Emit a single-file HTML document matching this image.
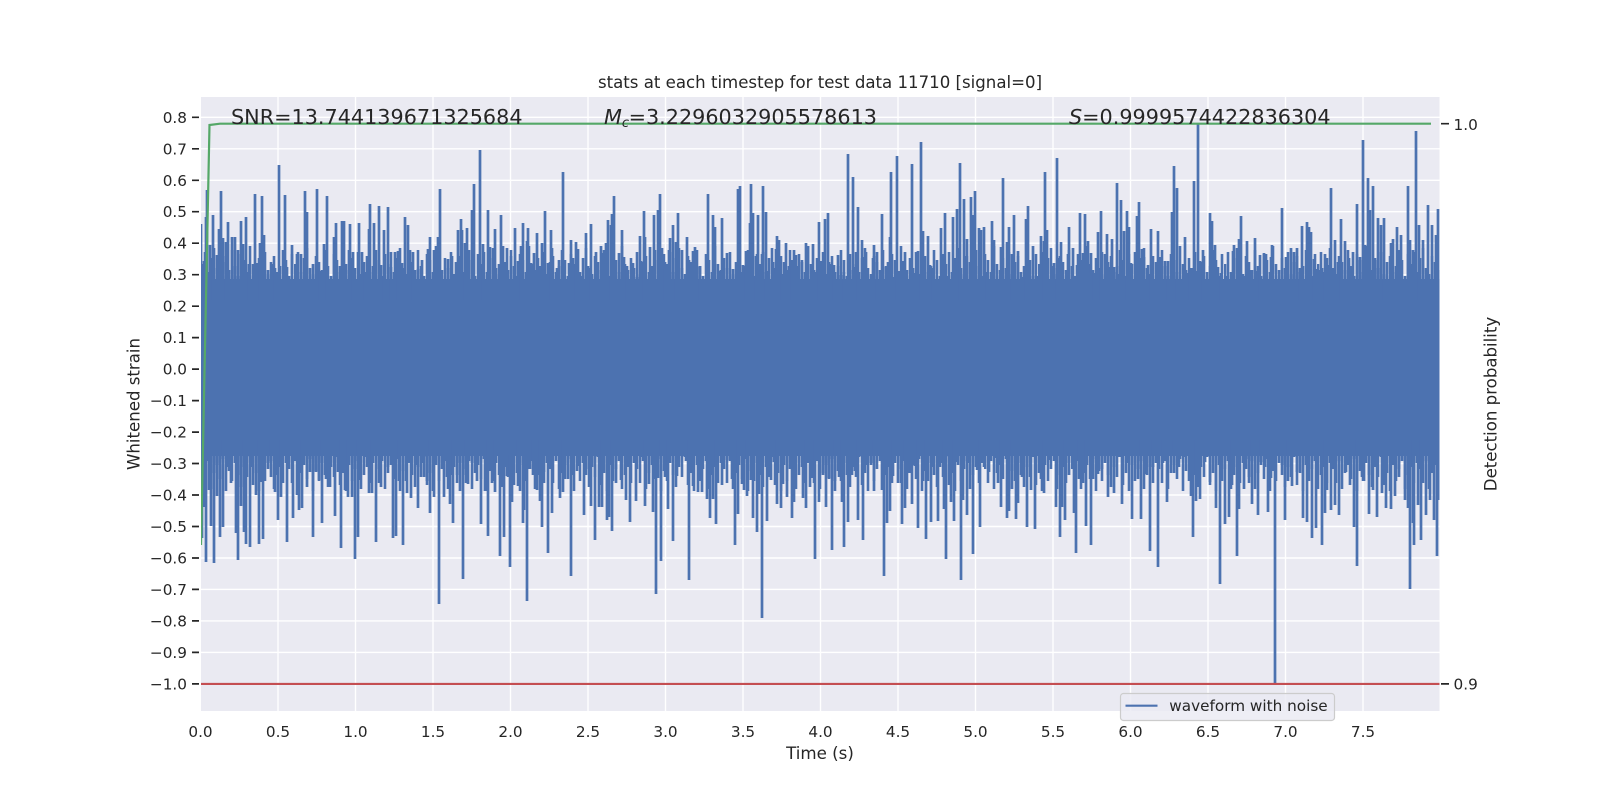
<!DOCTYPE html>
<html><head><meta charset="utf-8"><title>stats</title>
<style>html,body{margin:0;padding:0;background:#fff}svg{display:block}text{font-family:"DejaVu Sans","Liberation Sans",sans-serif;fill:#262626}</style>
</head><body>
<svg width="1600" height="800" viewBox="0 0 1600 800" xmlns="http://www.w3.org/2000/svg">
<defs><clipPath id="ax"><rect x="201" y="97" width="1238.5" height="614"/></clipPath>
<pattern id="pt" x="201" y="244" width="93" height="37" patternUnits="userSpaceOnUse">
<path fill="none" stroke="#4c72b0" stroke-width="2.6" d="M1 20V37M4 8V37M7 28V37M10 14V37M13 4V37M16 24V37M19 30V37M22 12V37M25 18V37M28 26V37M31 6V37M34 22V37M37 32V37M40 10V37M43 16V37M46 28V37M49 2V37M52 20V37M55 26V37M58 14V37M61 24V37M64 8V37M67 30V37M70 18V37M73 12V37M76 28V37M79 22V37M82 6V37M85 16V37M88 32V37M91 10V37"/>
</pattern>
<pattern id="pb" x="201" y="455" width="87" height="38" patternUnits="userSpaceOnUse">
<path fill="none" stroke="#4c72b0" stroke-width="2.6" d="M1 0V14M4 0V28M7 0V6M10 0V34M13 0V18M16 0V10M19 0V24M22 0V4M25 0V36M28 0V16M31 0V26M34 0V8M37 0V20M40 0V32M43 0V12M46 0V22M49 0V2M52 0V30M55 0V18M58 0V36M61 0V10M64 0V26M67 0V14M70 0V6M73 0V34M76 0V20M79 0V12M82 0V28M85 0V8"/>
</pattern>
</defs>
<rect width="1600" height="800" fill="#fff"/>
<rect x="201" y="97" width="1238.5" height="614" fill="#eaeaf2"/>
<g stroke="#fff" stroke-width="1.4" fill="none">
<path d="M278 97V711M355.5 97V711M433 97V711M510.5 97V711M588 97V711M665.5 97V711M743 97V711M820.5 97V711M898 97V711M975.5 97V711M1053 97V711M1130.5 97V711M1208 97V711M1285.5 97V711M1363 97V711"/>
<path d="M201 117.3H1439.5M201 148.8H1439.5M201 180.3H1439.5M201 211.7H1439.5M201 243.2H1439.5M201 274.7H1439.5M201 306.2H1439.5M201 337.6H1439.5M201 369.1H1439.5M201 400.6H1439.5M201 432.1H1439.5M201 463.5H1439.5M201 495H1439.5M201 526.5H1439.5M201 558H1439.5M201 589.4H1439.5M201 620.9H1439.5M201 652.4H1439.5M201 683.9H1439.5"/>
</g>
<g clip-path="url(#ax)">
<rect x="201" y="244" width="1239" height="37" fill="url(#pt)"/>
<rect x="201" y="455" width="1239" height="38" fill="url(#pb)"/>
<rect x="201" y="279" width="1239" height="177" fill="#4c72b0"/>
<path fill="none" stroke="#4c72b0" stroke-width="2.7" d="M201 224V300M204 261V300M206 217V300M207 190V300M210 245V300M213 215V300M217 255V300M219 229V300M221 191V300M223 238V300M226 242V300M228 222V300M232 237V300M235 237V300M238 250V300M241 221V300M243 244V300M246 217V300M249 264V300M255 194V300M257 263V300M260 243V300M262 196V300M264 235V300M268 270V300M272 264V300M275 268V300M279 165V300M285 195V300M287 267V300M292 245V300M297 254V300M301 254V300M305 191V300M307 212V300M313 264V300M317 189V300M320 271V300M324 244V300M327 196V300M334 237V300M336 223V300M340 266V300M342 221V300M344 221V300M349 250V300M350 224V300M353 252V300M359 223V300M362 252V300M365 272V300M369 229V300M370 204V300M374 223V300M379 206V300M381 265V300M384 230V300M388 207V300M391 267V300M395 252V300M398 251V300M402 263V300M405 217V300M408 225V300M410 250V300M413 252V300M418 269V300M422 260V300M428 249V300M430 237V300M434 250V300M438 237V300M440 189V300M448 259V300M452 256V300M456 262V300M458 230V300M461 219V300M462 230V300M465 243V300M467 228V300M472 210V300M474 184V300M480 150V300M483 244V300M488 210V300M490 247V300M495 229V300M499 264V300M501 215V300M503 246V300
M507 248V300M511 256V300M515 228V300M518 261V300M521 246V300M523 223V300M527 241V300M528 228V300M531 263V300M534 253V300M537 233V300M540 266V300M542 243V300M545 211V300M548 263V300M551 230V300M552 248V300M557 268V300M559 260V300M563 172V300M569 263V300M571 240V300M573 258V300M576 242V300M578 249V300M582 276V300M586 233V300M588 266V300M591 224V300M596 252V300M601 246V300M603 253V300M606 243V300M608 220V300M611 225V300M612 214V300M614 196V300M619 253V300M622 230V300M624 257V300M627 266V300M633 263V300M637 277V300M640 236V300M641 261V300M644 211V300M645 237V300M650 247V300M654 215V300M658 210V300M660 194V300M662 248V300M665 262V300M669 250V300M670 238V300M673 225V300M676 242V300M678 213V300M682 250V300M687 237V300M689 260V300M693 251V300M695 247V300M697 267V300M700 266V300M708 194V300M713 215V300M715 227V300M720 271V300M722 218V300M727 253V300M733 269V300M738 189V300M740 186V300M743 265V300M746 251V300M750 223V300M751 184V300M753 213V300M756 256V300M758 215V300M762 254V300M763 186V300M766 212V300M768 271V300M773 262V300M776 249V300M777 236V300M779 240V300M782 274V300M786 243V300M789 266V300M792 260V300M794 250V300M796 255V300M798 266V300M802 262V300M806 243V300M808 246V300
M813 244V300M816 272V300M819 222V300M821 261V300M825 219V300M828 213V300M831 264V300M834 265V300M838 255V300M841 275V300M844 272V300M848 154V300M850 270V300M853 177V300M855 267V300M858 207V300M862 240V300M864 257V300M866 252V300M873 258V300M874 245V300M877 252V300M882 214V300M886 267V300M888 262V300M890 237V300M891 172V300M894 277V300M897 156V300M899 271V300M903 261V300M905 252V300M912 164V300M915 273V300M918 251V300M921 142V300M923 231V300M928 236V300M930 265V300M933 268V300M941 228V300M945 213V300M947 276V300M953 217V300M957 209V300M960 163V300M964 199V300M966 256V300M967 239V300M971 197V300M973 215V300M975 191V300M979 228V300M981 230V300M984 227V300M987 272V300M992 221V300M994 240V300M1001 247V300M1003 178V300M1007 242V300M1009 227V300M1012 254V300M1014 215V300M1018 251V300M1023 277V300M1026 219V300M1028 206V300M1033 246V300M1037 276V300M1041 236V300M1044 241V300M1045 172V300M1047 230V300M1052 266V300M1054 263V300M1057 158V300M1059 258V300M1061 242V300M1068 254V300M1069 227V300M1073 248V300M1077 265V300M1080 213V300M1083 253V300M1085 214V300M1088 241V300M1091 253V300M1094 273V300M1098 232V300M1101 211V300M1105 254V300M1107 234V300M1109 267V300M1112 239V300M1114 267V300
M1117 183V300M1119 274V300M1121 200V300M1124 231V300M1127 211V300M1129 227V300M1131 263V300M1136 259V300M1137 216V300M1139 202V300M1142 249V300M1144 257V300M1148 265V300M1151 229V300M1158 231V300M1160 257V300M1165 261V300M1168 261V300M1172 212V300M1174 166V300M1177 188V300M1185 237V300M1187 273V300M1190 268V300M1194 181V300M1196 271V300M1198 124V300M1200 261V300M1203 250V300M1210 213V300M1212 221V300M1215 245V300M1218 267V300M1221 273V300M1227 276V300M1233 251V300M1234 245V300M1239 239V300M1241 216V300M1245 276V300M1247 241V300M1251 270V300M1255 238V300M1257 271V300M1260 255V300M1264 253V300M1266 254V300M1271 257V300M1272 245V300M1282 208V300M1286 257V300M1291 248V300M1294 252V300M1297 248V300M1300 268V300M1302 226V300M1307 222V300M1309 227V300M1311 232V300M1314 259V300M1316 269V300M1320 270V300M1322 268V300M1325 254V300M1329 265V300M1331 188V300M1335 240V300M1338 262V300M1341 219V300M1345 241V300M1349 258V300M1353 252V300M1357 204V300M1360 257V300M1363 140V300M1365 245V300M1368 178V300M1370 210V300M1373 186V300M1375 260V300M1378 218V300M1381 225V300M1384 218V300M1391 243V300M1393 239V300M1397 227V300M1401 235V300M1408 186V300M1410 240V300M1413 250V300M1416 131V300M1419 225V300M1423 240V300M1428 205V300M1432 225V300M1436 235V300M1438 209V300
M202 440V538M204 440V507M206 440V562M209 440V490M211 440V526M214 440V563M217 440V496M220 440V537M223 440V527M227 440V467M231 440V483M236 440V533M238 440V560M241 440V506M244 440V532M246 440V544M250 440V547M252 440V467M256 440V495M259 440V544M261 440V482M263 440V539M268 440V463M271 440V477M275 440V492M278 440V520M281 440V497M287 440V542M293 440V518M297 440V495M299 440V510M302 440V508M307 440V487M310 440V472M313 440V537M316 440V472M319 440V480M322 440V523M326 440V479M330 440V487M335 440V516M338 440V472M341 440V548M345 440V490M348 440V497M352 440V497M355 440V559M358 440V537M360 440V480M365 440V457M369 440V493M372 440V493M376 440V542M379 440V452M381 440V487M388 440V467M393 440V538M396 440V536M399 440V481M403 440V545M407 440V493M411 440V498M416 440V465M418 440V508M422 440V463M424 440V477M427 440V481M430 440V513M434 440V497M439 440V604M444 440V497M447 440V477M450 440V504M453 440V523M457 440V475M460 440V491M463 440V579M466 440V475M468 440V484M472 440V463M477 440V481M481 440V524M485 440V491M488 440V536M492 440V483M495 440V492M500 440V556M504 440V537
M507 440V476M510 440V567M512 440V502M515 440V455M518 440V486M523 440V523M524 440V510M527 440V601M530 440V469M533 440V475M537 440V490M540 440V501M542 440V527M544 440V472M548 440V553M552 440V513M560 440V498M563 440V492M565 440V479M571 440V576M573 440V475M579 440V466M584 440V515M586 440V469M591 440V506M595 440V540M599 440V507M602 440V507M607 440V520M609 440V517M612 440V531M616 440V483M621 440V480M626 440V500M630 440V522M636 440V501M642 440V457M645 440V506M649 440V484M653 440V512M656 440V594M658 440V478M661 440V561M665 440V477M668 440V509M673 440V541M677 440V476M681 440V448M686 440V461M689 440V580M693 440V486M698 440V492M702 440V492M707 440V499M710 440V518M713 440V499M716 440V524M722 440V485M727 440V460M732 440V479M735 440V545M738 440V514M742 440V484M744 440V490M747 440V496M751 440V480M753 440V518M757 440V532M759 440V494M762 440V618M767 440V521M771 440V480M774 440V462M777 440V504M781 440V508M783 440V484M787 440V497M792 440V518M794 440V502M798 440V447M803 440V498M806 440V508
M810 440V487M812 440V478M815 440V559M819 440V502M823 440V475M826 440V507M829 440V478M832 440V550M835 440V481M839 440V477M842 440V502M844 440V547M848 440V522M852 440V475M855 440V471M858 440V520M863 440V540M867 440V465M871 440V463M874 440V491M882 440V490M884 440V576M887 440V523M890 440V511M893 440V476M898 440V483M902 440V524M905 440V508M909 440V473M912 440V504M915 440V466M918 440V528M923 440V481M926 440V539M931 440V522M933 440V467M938 440V521M941 440V463M944 440V509M946 440V559M951 440V502M954 440V521M956 440V462M961 440V580M963 440V500M967 440V515M969 440V463M973 440V554M977 440V470M980 440V527M984 440V467M989 440V472M995 440V458M998 440V483M1001 440V507M1007 440V518M1009 440V511M1012 440V489M1016 440V519M1018 440V503M1022 440V477M1027 440V527M1031 440V490M1035 440V529M1041 440V479M1044 440V493M1049 440V460M1056 440V507M1060 440V537M1062 440V507M1065 440V520M1069 440V475M1074 440V513M1076 440V553M1079 440V479M1083 440V483M1086 440V526M1091 440V545M1093 440V479M1098 440V474M1102 440V469M1108 440V497M1114 440V493
M1118 440V457M1122 440V504M1127 440V463M1132 440V519M1138 440V479M1141 440V519M1146 440V474M1150 440V551M1153 440V467M1158 440V567M1160 440V452M1163 440V463M1167 440V502M1171 440V452M1174 440V473M1179 440V467M1185 440V457M1191 440V496M1193 440V537M1196 440V501M1200 440V499M1205 440V462M1210 440V482M1216 440V508M1220 440V584M1225 440V524M1229 440V517M1232 440V485M1237 440V556M1239 440V509M1244 440V489M1246 440V459M1249 440V477M1252 440V504M1258 440V515M1261 440V462M1265 440V467M1268 440V512M1271 440V478M1275 440V684M1279 440V455M1282 440V465M1285 440V520M1288 440V481M1292 440V486M1297 440V472M1303 440V518M1307 440V522M1312 440V538M1316 440V528M1322 440V545M1325 440V513M1327 440V490M1331 440V510M1335 440V505M1339 440V515M1346 440V472M1350 440V485M1354 440V527M1357 440V566M1362 440V477M1364 440V481M1369 440V514M1373 440V490M1377 440V517M1382 440V493M1386 440V508M1391 440V509M1395 440V496M1399 440V477M1405 440V500M1408 440V508M1410 440V589M1413 440V523M1414 440V545M1418 440V505M1421 440V540M1426 440V515M1430 440V500M1434 440V520M1437 440V556M1439 440V500"/>
<path d="M201 683.9H1439.5" stroke="#c44e52" stroke-width="2.1" fill="none"/>
<path d="M201 545L209.5 125L220 123.7H1431" stroke="#55a868" stroke-width="2.2" fill="none"/>
</g>
<g stroke="#262626" stroke-width="1.7" fill="none">
<path d="M192 117.3H199M192 148.8H199M192 180.3H199M192 211.7H199M192 243.2H199M192 274.7H199M192 306.2H199M192 337.6H199M192 369.1H199M192 400.6H199M192 432.1H199M192 463.5H199M192 495H199M192 526.5H199M192 558H199M192 589.4H199M192 620.9H199M192 652.4H199M192 683.9H199"/>
<path d="M1441 123.7H1449M1441 683.9H1449"/>
</g>
<g font-size="15.28" text-anchor="end">
<text x="187" y="122.8">0.8</text><text x="187" y="154.3">0.7</text><text x="187" y="185.8">0.6</text><text x="187" y="217.2">0.5</text><text x="187" y="248.7">0.4</text><text x="187" y="280.2">0.3</text><text x="187" y="311.7">0.2</text><text x="187" y="343.1">0.1</text><text x="187" y="374.6">0.0</text><text x="187" y="406.1">−0.1</text><text x="187" y="437.6">−0.2</text><text x="187" y="469">−0.3</text><text x="187" y="500.5">−0.4</text><text x="187" y="532">−0.5</text><text x="187" y="563.5">−0.6</text><text x="187" y="594.9">−0.7</text><text x="187" y="626.4">−0.8</text><text x="187" y="657.9">−0.9</text><text x="187" y="689.4">−1.0</text>
</g>
<g font-size="15.28" text-anchor="middle">
<text x="200.5" y="737">0.0</text><text x="278" y="737">0.5</text><text x="355.5" y="737">1.0</text><text x="433" y="737">1.5</text><text x="510.5" y="737">2.0</text><text x="588" y="737">2.5</text><text x="665.5" y="737">3.0</text><text x="743" y="737">3.5</text><text x="820.5" y="737">4.0</text><text x="898" y="737">4.5</text><text x="975.5" y="737">5.0</text><text x="1053" y="737">5.5</text><text x="1130.5" y="737">6.0</text><text x="1208" y="737">6.5</text><text x="1285.5" y="737">7.0</text><text x="1363" y="737">7.5</text>
</g>
<text x="1453.5" y="129.8" font-size="15.28">1.0</text>
<text x="1453.5" y="689.4" font-size="15.28">0.9</text>
<text x="820" y="88" font-size="16.6" text-anchor="middle">stats at each timestep for test data 11710 [signal=0]</text>
<text x="820" y="759" font-size="16.67" text-anchor="middle">Time (s)</text>
<text transform="translate(139.5,404) rotate(-90)" font-size="16.6" text-anchor="middle">Whitened strain</text>
<text transform="translate(1496.5,404) rotate(-90)" font-size="16.6" text-anchor="middle">Detection probability</text>
<text x="231" y="124" font-size="20.75">SNR=13.744139671325684</text>
<text x="604" y="124" font-size="20.75"><tspan font-style="italic">M</tspan><tspan font-style="italic" font-size="13" dy="3">c</tspan><tspan dy="-3" dx="-0.5">=3.2296032905578613</tspan></text>
<text x="1069" y="124" font-size="20.75"><tspan font-style="italic">S</tspan>=0.9999574422836304</text>
<rect x="1120.5" y="693.5" width="214" height="27" rx="3" ry="3" fill="#eaeaf2" fill-opacity="0.8" stroke="#cccccc" stroke-width="1.2"/>
<path d="M1125.5 705.7H1157.5" stroke="#4c72b0" stroke-width="2.1" fill="none"/>
<text x="1169.3" y="711" font-size="15.25">waveform with noise</text>
</svg>
</body></html>
